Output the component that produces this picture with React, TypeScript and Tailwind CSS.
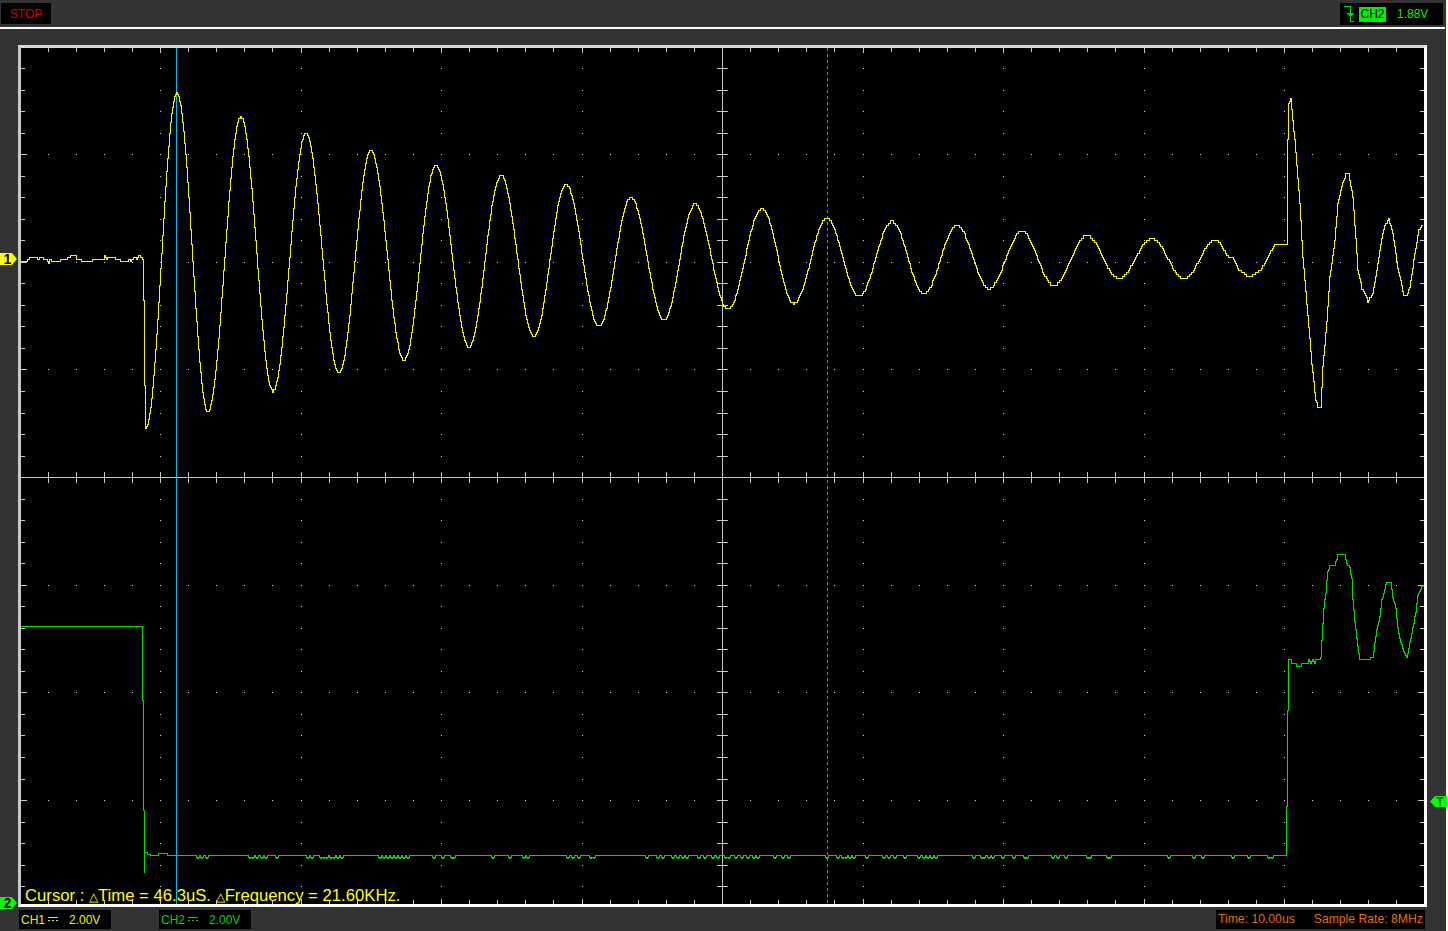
import React from "react";

type Pt = [number, number];

// extrema of the ringing on channel 1, eased with a cosine between them
const swing: Pt[] = [
  [146, 427], [177, 93], [208, 411], [241, 116], [273, 391], [306, 133], [339, 373], [371, 150],
  [404, 360], [436, 165], [469, 347], [501, 175], [534, 336], [566, 184], [599, 326], [631, 197],
  [664, 319], [695, 204], [728, 309], [762, 208], [794, 303], [827, 218], [859, 296], [892, 221],
  [924, 293], [957, 225], [989, 288], [1022, 231], [1054, 285], [1087, 235], [1119, 278], [1152, 238],
  [1184, 278], [1216, 239], [1230, 256],
];

const ch1Start: Pt[] = [
  [21, 262], [26, 262], [28, 259], [31, 256], [36, 256], [38, 259], [40, 257], [42, 256], [44, 259],
  [47, 259], [49, 263], [50, 259], [52, 261], [60, 261], [62, 259], [67, 258], [68, 256], [76, 255],
  [77, 258], [83, 261], [92, 261], [94, 258], [104, 258], [105, 255], [107, 258], [112, 257], [114, 256],
  [116, 258], [122, 261], [128, 261], [130, 258], [131, 262], [133, 258], [135, 256], [137, 258],
  [139, 255], [142, 257], [143, 258], [144, 300], [145, 385],
];

const ch1End: Pt[] = [
  [1233, 256], [1238, 268], [1247, 275], [1252, 275], [1262, 268], [1275, 244], [1287, 244], [1288, 140],
  [1289, 102], [1291, 99], [1295, 140], [1300, 203], [1303, 257], [1307, 303], [1312, 363], [1316, 400],
  [1318, 406], [1321, 406], [1323, 367], [1327, 320], [1330, 277], [1335, 240], [1338, 203], [1343, 182],
  [1346, 174], [1349, 174], [1353, 197], [1356, 237], [1358, 270], [1362, 288], [1366, 295], [1368, 302],
  [1373, 293], [1377, 270], [1382, 237], [1385, 225], [1389, 218], [1393, 233], [1398, 267], [1404, 295],
  [1407, 295], [1410, 287], [1415, 253], [1419, 230], [1423, 224],
];

const ch2End: Pt[] = [
  [1288, 659], [1291, 659], [1292, 663], [1296, 663], [1297, 666], [1301, 666], [1302, 663], [1308, 663],
  [1309, 660], [1311, 663], [1313, 660], [1315, 663], [1316, 659], [1321, 658], [1322, 640], [1323, 622],
  [1324, 607], [1326, 593], [1327, 579], [1328, 571], [1330, 566], [1335, 565], [1338, 555], [1345, 555],
  [1347, 562], [1350, 568], [1352, 577], [1353, 600], [1355, 620], [1357, 637], [1358, 647], [1360, 659],
  [1370, 659], [1373, 656], [1375, 643], [1377, 630], [1380, 617], [1382, 600], [1385, 588], [1387, 582],
  [1391, 582], [1393, 597], [1396, 607], [1398, 628], [1401, 642], [1403, 648], [1407, 657], [1410, 643],
  [1413, 628], [1416, 612], [1418, 595], [1423, 585],
];

const dips = [
  197, 201, 206, 249, 252, 256, 261, 265, 276, 307, 311, 320, 323, 326, 330, 333, 337, 341, 379, 383, 387,
  391, 395, 399, 403, 407, 433, 442, 451, 453, 492, 509, 523, 527, 567, 572, 578, 590, 593, 646, 657, 662,
  672, 677, 682, 686, 698, 704, 712, 717, 725, 728, 735, 741, 747, 753, 757, 774, 782, 788, 826, 837, 842,
  845, 849, 853, 866, 883, 888, 894, 904, 918, 923, 927, 931, 935, 973, 981, 983, 988, 992, 1002, 1013,
  1024, 1026, 1052, 1057, 1065, 1087, 1089, 1107, 1109, 1168, 1193, 1202, 1232, 1248, 1268, 1271,
];

const quant = (y: number) => Math.round(Math.round(y / 2.14) * 2.14);

// one sample a pixel, drawn as steps the way the scope paints it
function stepPath(pts: Pt[]) {
  let d = `M${pts[0][0]} ${pts[0][1] + 0.5}`;
  for (let i = 1; i < pts.length; i++) {
    const [x0, y0] = pts[i - 1];
    const [x1, y1] = pts[i];
    for (let x = x0 + 1; x <= x1; x++) {
      const t = (x - x0) / (x1 - x0);
      d += ` H${x - 0.5} V${quant(y0 + (y1 - y0) * t) + 0.5}`;
    }
  }
  return d;
}

function easedPoints() {
  const out: Pt[] = [];
  for (let i = 1; i < swing.length; i++) {
    const [x0, y0] = swing[i - 1];
    const [x1, y1] = swing[i];
    for (let x = x0; x < x1; x++) {
      const t = (1 - Math.cos((Math.PI * (x - x0)) / (x1 - x0))) / 2;
      out.push([x, y0 + (y1 - y0) * t]);
    }
  }
  return out;
}

const ch1Path = stepPath([...ch1Start, ...easedPoints(), ...ch1End]);

function ch2Path() {
  const flat: Pt[] = [[150, 855], [155, 855], [158, 853], [165, 853], [167, 855]];
  let d = "M21 626.5 H142.5 V700 H143.5 V810 H144.5 V872.5";
  d += " M144.5 852 H147.5 V854";
  flat.forEach(([x, y]) => (d += ` H${x + 0.5} V${y + 0.5}`));
  for (let x = 168; x <= 1286; x++) {
    let y = 855;
    if (dips.includes(x)) y = 858;
    else if (dips.includes(x - 1) || dips.includes(x + 1)) y = 857;
    d += ` H${x + 0.5} V${y + 0.5}`;
  }
  d += " V806.5 H1287.5 V710.5 H1288.5 V659.5";
  d += " " + stepPath(ch2End);
  return d;
}

const xAt = (k: number) => Math.round(722 + k * 28.1) + 0.5;
const yAt = (k: number) => Math.floor(477.6 + k * 21.53) + 0.5;
const xSteps = Array.from({ length: 51 }, (_, i) => i - 25).filter((k) => xAt(k) > 22 && xAt(k) < 1423);
const ySteps = Array.from({ length: 41 }, (_, i) => i - 20).filter((k) => yAt(k) > 49 && yAt(k) < 903);

function Scope() {
  let ticks = "";
  let dots = "";
  xSteps.forEach((k) => {
    const x = xAt(k);
    const len = k % 5 === 0 ? 5 : 4;
    ticks += ` M${x} 48 v${len} M${x} 904 v-${len}`;
    if (k !== 0) ticks += ` M${x} 472 v11`;
    if (k % 5 === 0 && k !== 0) ySteps.forEach((j) => j !== 0 && (dots += ` M${x} ${yAt(j) - 0.5} v1`));
  });
  ySteps.forEach((k) => {
    const y = yAt(k);
    const len = k % 5 === 0 ? 6 : 4;
    ticks += ` M21 ${y} h${len} M1424 ${y} h-${len}`;
    if (k !== 0) ticks += ` M717 ${y} h11`;
    if (k % 5 === 0 && k !== 0) xSteps.forEach((j) => j !== 0 && (dots += ` M${xAt(j)} ${y - 0.5} v1`));
  });

  return (
    <svg viewBox="21 48 1403 856" className="block h-full w-full" fill="none" shapeRendering="crispEdges">
      <path d={dots} stroke="#d8d8d8" strokeWidth="1" />
      <path d={ticks} stroke="#c8c8c8" strokeWidth="1" />
      <path d="M722.5 48 V904 M21 477.5 H1424" stroke="#c8c8c8" strokeWidth="1" />
      <path d="M176.5 48 V904" stroke="#12b4ee" strokeWidth="1" />
      <path d="M827.5 48 V904" stroke="#12b4ee" strokeWidth="1" strokeDasharray="3 3" />
      <path d={ch1Path} stroke="#f4f400" strokeWidth="1" />
      <path d={ch2Path()} stroke="#00e000" strokeWidth="1" />
    </svg>
  );
}

function Coupling({ color }: { color: string }) {
  return (
    <svg width="11" height="6" viewBox="0 0 11 6" className="ml-[3px] mr-[10px]" shapeRendering="crispEdges">
      <path d="M0 0.5 H10" stroke={color} />
      <path d="M0 3.5 H10" stroke={color} strokeDasharray="2 2" />
    </svg>
  );
}

function ChannelBox({ name, color, textClass, className }: { name: string; color: string; textClass: string; className?: string }) {
  return (
    <div className={`flex h-[19px] w-[92px] items-center bg-black pl-[2px] text-xs ${textClass} ${className ?? ""}`}>
      <span>{name}</span>
      <Coupling color={color} />
      <span>2.00V</span>
    </div>
  );
}

export default function App() {
  return (
    <div className="relative flex h-[931px] w-[1448px] overflow-hidden bg-[#333333] font-['Liberation_Sans',Arial,sans-serif]">
      <div className="flex w-[1446px] flex-col">
        <header className="flex h-[27px] items-start justify-between pl-px pr-[3px] pt-[3px]">
          <div className="flex h-[21px] w-[50px] items-center justify-center bg-black text-xs text-[#d80000]">STOP</div>
          <div className="flex h-[22px] w-[103px] items-center bg-black pl-1 text-xs text-[#00f000]">
            <svg width="11" height="18" viewBox="0 0 11 18" shapeRendering="crispEdges">
              <path d="M0 1.5 H6.5 V16.5 H10" stroke="#00e000" fill="none" />
              <path d="M2 8 H10 L6 12 Z" fill="#00e000" />
            </svg>
            <span className="ml-[4px] flex h-[15px] w-[27px] items-center justify-center bg-[#00f000] text-black">CH2</span>
            <span className="ml-[11px]">1.88V</span>
          </div>
        </header>
        <div className="mr-px h-[2px] bg-white" />
        <main className="flex-1 pl-[18px] pt-[16px]">
          <div className="relative h-[862px] w-[1409px] border-b-[3px] border-l-[3px] border-r-[3px] border-t-[3px] border-b-white border-l-[#c8c8c8] border-r-white border-t-[#d8d8d8] bg-black">
            <Scope />
            <div className="absolute bottom-0 left-[4px] text-[16.7px] leading-[13px] whitespace-nowrap text-[#ffff00]">
              Cursor : <span className="text-[12px]">△</span>Time = 46.3uS. <span className="text-[12px]">△</span>Frequency = 21.60KHz.
            </div>
          </div>
        </main>
        <footer className="flex h-[24px] items-start pl-[19px] pr-[21px] pt-[3px]">
          <ChannelBox name="CH1" color="#f0f000" textClass="text-[#f0f000]" />
          <ChannelBox name="CH2" color="#00d800" textClass="text-[#00d800]" className="ml-[48px]" />
          <div className="ml-auto flex h-[19px] w-[209px] items-center bg-black pl-[2px] text-[12.2px] text-[#e07000]">
            <span>Time: 10.00us</span>
            <span className="ml-[19px]">Sample Rate: 8MHz</span>
          </div>
        </footer>
      </div>
      <div className="w-[2px] bg-[#fdf9e2]" />

      <div className="absolute left-0 top-[253px] flex h-[12px] w-[17px] items-center justify-center bg-[#ffff00] pr-[2px] text-sm font-bold text-black [clip-path:polygon(0_0,70%_0,100%_50%,70%_100%,0_100%)]">1</div>
      <div className="absolute left-0 top-[897px] flex h-[12px] w-[17px] items-center justify-center bg-[#00ff00] pr-[2px] text-sm font-bold text-black [clip-path:polygon(0_0,70%_0,100%_50%,70%_100%,0_100%)]">2</div>
      <div className="absolute left-[1430px] top-[796px] flex h-[11px] w-[17px] items-center justify-center bg-[#00ff00] pl-[3px] text-xs font-bold text-[#006600] [clip-path:polygon(0_50%,30%_0,100%_0,100%_100%,30%_100%)]">T</div>
    </div>
  );
}
